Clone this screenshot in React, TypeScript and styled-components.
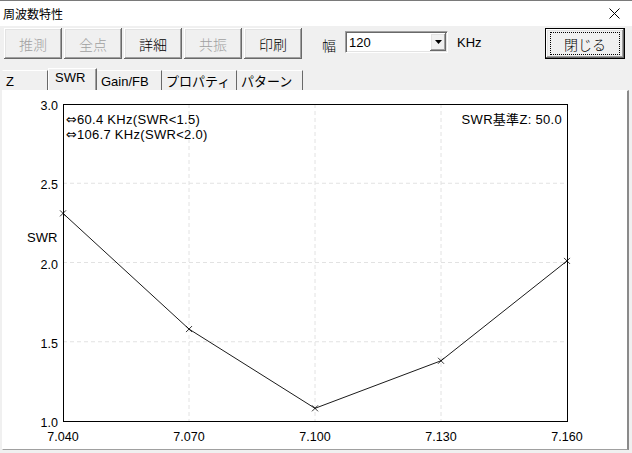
import React from 'react';
import styled, { createGlobalStyle } from 'styled-components';

const GlobalStyle = createGlobalStyle`
  html, body {
    margin: 0;
    padding: 0;
    background: #f0f0f0;
  }
  body {
    font-family: "Liberation Sans", "Noto Sans CJK JP", sans-serif;
    color: #000;
  }
`;

const Window = styled.div`
  width: 632px;
  height: 453px;
  display: flex;
  flex-direction: column;
  background: #f0f0f0;
  border-top: 1px solid #7a7a7a;
  box-sizing: border-box;
  overflow: hidden;
`;

const TitleBar = styled.div`
  height: 25px;
  background: #fff;
  display: flex;
  align-items: center;
  justify-content: space-between;
  padding: 0 12px 0 3px;
  font-size: 12px;
  font-family: "Noto Sans CJK JP", sans-serif;
`;

const Toolbar = styled.div`
  height: 40px;
  display: flex;
  align-items: flex-start;
  padding: 2px 7px 0 4px;
  box-sizing: border-box;
`;

const ButtonGroup = styled.div`
  display: flex;
  gap: 2px;
`;

const Button = styled.button<{ $disabled?: boolean; $w?: number }>`
  width: ${p => p.$w ?? 58}px;
  height: 31px;
  padding: 0;
  border: none;
  background: #f0f0f0;
  box-shadow: inset -1px -1px #696969, inset 1px 1px #fff,
    inset -2px -2px #a0a0a0, inset 2px 2px #e3e3e3;
  font-family: "Noto Sans CJK JP", sans-serif;
  font-weight: 300;
  font-size: 14px;
  line-height: 16px;
  color: ${p => (p.$disabled ? '#a0a0a0' : '#000')};
  display: flex;
  align-items: center;
  justify-content: center;
`;

const DefaultButton = styled(Button)`
  border: 1px solid #000;
  box-sizing: border-box;
`;

const FocusRing = styled.span`
  display: flex;
  align-items: center;
  justify-content: center;
  width: 68px;
  height: 21px;
  border: 1px dotted #000;
`;

const FieldLabel = styled.span`
  font-family: "Noto Sans CJK JP", sans-serif;
  font-weight: 300;
  font-size: 14px;
  line-height: 16px;
  margin: 9px 9px 0 20px;
`;

const Combo = styled.div`
  width: 103px;
  height: 22px;
  margin-top: 3px;
  box-sizing: border-box;
  background: #fff;
  border-top: 1px solid #a0a0a0;
  border-left: 1px solid #a0a0a0;
  border-right: 1px solid #fff;
  border-bottom: 1px solid #fff;
  box-shadow: inset 1px 1px #696969, inset -1px -1px #e3e3e3;
  display: flex;
  align-items: center;
  padding: 0 1px 0 3px;
  font-size: 13px;
`;

const ComboValue = styled.span`
  flex: 1;
`;

const DropButton = styled.span`
  width: 16px;
  height: 18px;
  background: #f0f0f0;
  box-shadow: inset -1px -1px #696969, inset 1px 1px #fff,
    inset -2px -2px #a0a0a0, inset 2px 2px #e3e3e3;
  display: flex;
  align-items: center;
  justify-content: center;
`;

const Unit = styled.span`
  font-size: 13px;
  margin: 7px 0 0 9px;
`;

const Spacer = styled.div`
  flex: 1;
`;

const TabStrip = styled.div`
  height: 24px;
  display: flex;
  align-items: flex-end;
  padding-left: 2px;
`;

const Tab = styled.div<{ $w: number; $active?: boolean }>`
  width: ${p => p.$w}px;
  height: ${p => (p.$active ? 22 : 20)}px;
  box-sizing: border-box;
  border-top: 1px solid #fff;
  border-left: 1px solid ${p => (p.$active ? '#fff' : '#f0f0f0')};
  border-right: 1px solid #696969;
  box-shadow: ${p => (p.$active ? 'inset -1px 0 #a0a0a0' : 'none')};
  padding: ${p => (p.$active ? '1px 0 0 6px' : '3px 0 0 3px')};
  font-family: "Liberation Sans", "Noto Sans CJK JP", sans-serif;
  font-size: 13px;
  line-height: 15px;
  white-space: nowrap;
`;

const Panel = styled.div`
  width: 627px;
  height: 360px;
  margin-left: 2px;
  box-sizing: border-box;
  background: #fff;
  border-left: 1px solid #fff;
  border-top: 1px solid #fff;
  border-right: 2px solid #8a8a8a;
  border-bottom: 1px solid #a0a0a0;
`;

const tabs = [
  { label: 'Z', w: 46 },
  { label: 'SWR', w: 49, active: true },
  { label: 'Gain/FB', w: 65 },
  { label: 'プロパティ', w: 75 },
  { label: 'パターン', w: 66 },
];

const data = [
  { f: 7.04, s: 2.31 },
  { f: 7.07, s: 1.58 },
  { f: 7.1, s: 1.08 },
  { f: 7.13, s: 1.38 },
  { f: 7.16, s: 2.01 },
];

const X0 = 60;
const X1 = 564;
const Y0 = 13;
const Y1 = 330;
const px = (f: number) => X0 + ((f - 7.04) / 0.12) * (X1 - X0);
const py = (s: number) => Y1 - ((s - 1) / 2) * (Y1 - Y0);

const Arrow = () => (
  <tspan fontFamily='"DejaVu Sans", sans-serif' fontSize="13" letterSpacing="0">⇔</tspan>
);

function SwrChart() {
  const xTicks = [7.04, 7.07, 7.1, 7.13, 7.16];
  const yTicks = [1.0, 1.5, 2.0, 2.5, 3.0];
  const pts = data.map(d => `${px(d.f)},${py(d.s)}`).join(' ');
  return (
    <svg width="624" height="358" style={{ display: 'block' }} fontFamily='"Liberation Sans", "Noto Sans CJK JP", sans-serif' fontSize="12">
      {xTicks.slice(1, -1).map(f => (
        <line key={f} x1={px(f)} x2={px(f)} y1={Y0} y2={Y1} stroke="#e2e2e2" strokeDasharray="4 3" />
      ))}
      {yTicks.slice(1, -1).map(s => (
        <line key={s} x1={X0} x2={X1} y1={py(s)} y2={py(s)} stroke="#e2e2e2" strokeDasharray="4 3" />
      ))}
      <rect x={X0 + 0.5} y={Y0 + 0.5} width={X1 - X0} height={Y1 - Y0} fill="none" stroke="#000" />
      <polyline points={pts} fill="none" stroke="#000" strokeWidth="0.9" />
      {data.map(d => (
        <path
          key={d.f}
          d={`M${px(d.f) - 3},${py(d.s) - 3}L${px(d.f) + 3},${py(d.s) + 3}M${px(d.f) - 3},${py(d.s) + 3}L${px(d.f) + 3},${py(d.s) - 3}`}
          stroke="#000"
          strokeWidth="0.8"
        />
      ))}
      {yTicks.map(s => (
        <text key={s} x={55} y={py(s) + 6} textAnchor="end" fontSize="12.5">{s.toFixed(1)}</text>
      ))}
      {xTicks.map(f => (
        <text key={f} x={px(f)} y={350} textAnchor="middle" fontSize="12.5">{f.toFixed(3)}</text>
      ))}
      <text x={24} y={151} fontSize="13">SWR</text>
      <g fontSize="13" letterSpacing="0.3">
        <text x={63} y={32.5}><Arrow />60.4  KHz(SWR&lt;1.5)</text>
        <text x={63} y={48}><Arrow />106.7  KHz(SWR&lt;2.0)</text>
        <text x={559} y={32.5} textAnchor="end">SWR基準Z: 50.0</text>
      </g>
    </svg>
  );
}

export default function App() {
  return (
    <>
      <GlobalStyle />
      <Window>
        <TitleBar>
          <span>周波数特性</span>
          <svg width="11" height="11" viewBox="0 0 11 11">
            <path d="M0.5,0.5L10.5,10.5M10.5,0.5L0.5,10.5" stroke="#000" strokeWidth="1" />
          </svg>
        </TitleBar>
        <Toolbar>
          <ButtonGroup>
            <Button $disabled>推測</Button>
            <Button $disabled>全点</Button>
            <Button>詳細</Button>
            <Button $disabled>共振</Button>
            <Button>印刷</Button>
          </ButtonGroup>
          <FieldLabel>幅</FieldLabel>
          <Combo>
            <ComboValue>120</ComboValue>
            <DropButton>
              <svg width="7" height="4" viewBox="0 0 7 4">
                <path d="M0,0H7L3.5,4Z" fill="#000" />
              </svg>
            </DropButton>
          </Combo>
          <Unit>KHz</Unit>
          <Spacer />
          <DefaultButton $w={80}>
            <FocusRing>閉じる</FocusRing>
          </DefaultButton>
        </Toolbar>
        <TabStrip>
          {tabs.map(t => (
            <Tab key={t.label} $w={t.w} $active={t.active}>{t.label}</Tab>
          ))}
        </TabStrip>
        <Panel>
          <SwrChart />
        </Panel>
      </Window>
    </>
  );
}
